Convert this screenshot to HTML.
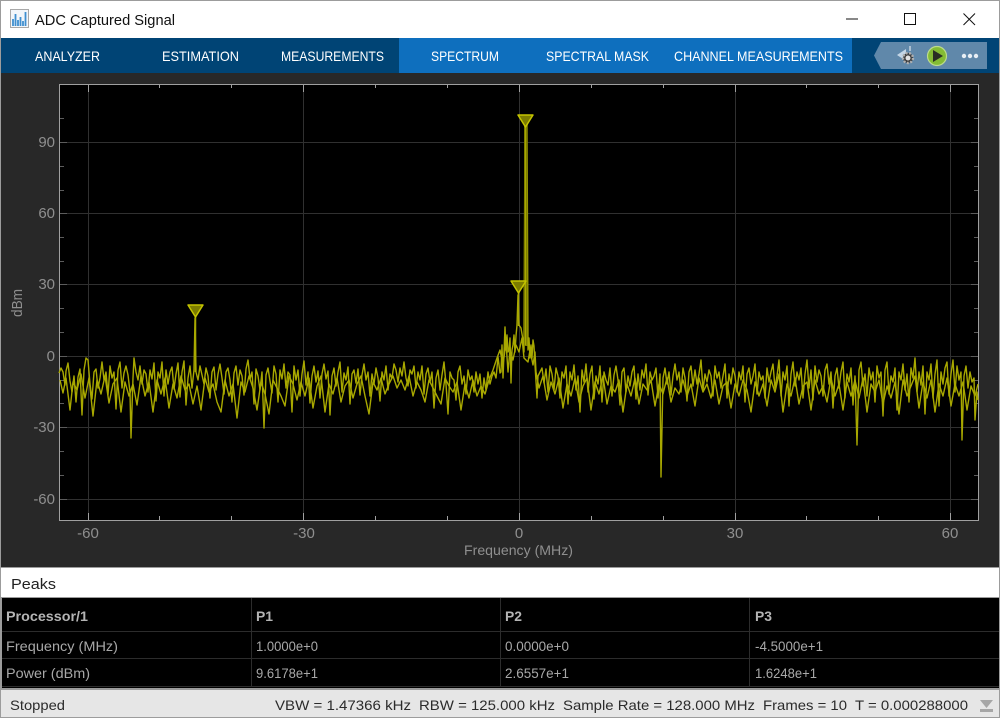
<!DOCTYPE html>
<html><head><meta charset="utf-8"><title>ADC Captured Signal</title>
<style>
html,body{margin:0;padding:0;background:#000;width:1000px;height:718px;overflow:hidden}
svg{display:block;font-family:"Liberation Sans",sans-serif}
.tab{fill:#fff;font-size:14px}
.ax{fill:#8f8f8f;font-size:15px}
.cell{fill:#a8a8a8;font-size:14px}
.hd{fill:#b4b4b4;font-size:14px;font-weight:bold}
.st{fill:#2b2b2b;font-size:14px}
</style></head><body>
<svg width="1000" height="718" viewBox="0 0 1000 718" xmlns="http://www.w3.org/2000/svg">
<defs><filter id="b" x="-2%" y="-2%" width="104%" height="104%"><feGaussianBlur stdDeviation="0.3"/></filter></defs>
<rect width="1000" height="718" fill="#9c9c9c"/>
<rect x="1" y="1" width="998" height="37" fill="#fff"/>
<!-- app icon -->
<rect x="10.500" y="9.500" width="18" height="18" fill="#f2f6fa" stroke="#a8a8a8"/>
<path d="M13 26V19M15.500 26V14M18 26V20M20.500 26V17M23 26V21M25.500 26V12" stroke="#3f8fd0" stroke-width="1.800" fill="none"/>
<text x="35" y="25" font-size="15" fill="#111" textLength="140" lengthAdjust="spacingAndGlyphs">ADC Captured Signal</text>
<!-- window controls -->
<path d="M846 19H858" stroke="#111" stroke-width="1"/>
<rect x="904.500" y="13.500" width="11" height="11" fill="none" stroke="#111"/>
<path d="M963.500 13.500L975 25M975 13.500L963.500 25" stroke="#111" stroke-width="1" fill="none"/>
<!-- toolstrip -->
<rect x="1" y="38" width="998" height="35" fill="#004475"/>
<rect x="399" y="38" width="453" height="35" fill="#0e6fbe"/>
<text class="tab" x="35" y="61" textLength="65" lengthAdjust="spacingAndGlyphs">ANALYZER</text>
<text class="tab" x="162" y="61" textLength="77" lengthAdjust="spacingAndGlyphs">ESTIMATION</text>
<text class="tab" x="281" y="61" textLength="103" lengthAdjust="spacingAndGlyphs">MEASUREMENTS</text>
<text class="tab" x="431" y="61" textLength="68" lengthAdjust="spacingAndGlyphs">SPECTRUM</text>
<text class="tab" x="546" y="61" textLength="103" lengthAdjust="spacingAndGlyphs">SPECTRAL MASK</text>
<text class="tab" x="674" y="61" textLength="169" lengthAdjust="spacingAndGlyphs">CHANNEL MEASUREMENTS</text>
<polygon points="881,42 987,42 987,69 881,69 874,55.500" fill="#6088aa"/>
<!-- toolbar icons -->
<polygon points="897,55 906,49 906,61" fill="#c4d6e6"/>
<circle cx="908" cy="58" r="5" fill="#3c3c3c" stroke="#b0b0b0" stroke-width="2.400" stroke-dasharray="2 1.500"/>
<circle cx="908" cy="58" r="2.500" fill="#e2e2e2"/>
<path d="M910 46V51" stroke="#dde6ee" stroke-width="1.200"/>
<circle cx="937" cy="56" r="9.500" fill="#84bc34" stroke="#bcdc8c" stroke-width="1.200"/>
<polygon points="933,50 933,62 943,56" fill="#2a2f24"/>
<circle cx="964" cy="56" r="2.200" fill="#e8eef4"/><circle cx="970" cy="56" r="2.200" fill="#e8eef4"/><circle cx="976" cy="56" r="2.200" fill="#e8eef4"/>
<!-- plot panel -->
<rect x="1" y="73" width="998" height="494" fill="#282828"/>
<rect x="59.500" y="84.500" width="919" height="436" fill="#000" stroke="#a0a0a0"/>
<g stroke="#303030" stroke-width="1">
<path d="M60 142.500H978M60 213.500H978M60 284.500H978M60 356.500H978M60 427.500H978M60 499.500H978"/>
<path d="M88.500 85V520M303.500 85V520M519.500 85V520M735.500 85V520M950.500 85V520"/>
</g>
<g stroke="#a0a0a0" stroke-width="1" fill="none">
<path d="M88.500 520V513M159.500 520V516M231.500 520V516M303.500 520V513M375.500 520V516M447.500 520V516M519.500 520V513M591.500 520V516M663.500 520V516M735.500 520V513M806.500 520V516M878.500 520V516M950.500 520V513"/>
<path d="M88.500 85V92M159.500 85V88M231.500 85V88M303.500 85V92M375.500 85V88M447.500 85V88M519.500 85V92M591.500 85V88M663.500 85V88M735.500 85V92M806.500 85V88M878.500 85V88M950.500 85V92"/>
</g>
<g stroke="#5c5c5c" stroke-width="1" fill="none">
<path d="M60 118.500H64M60 142.500H67M60 166.500H64M60 190.500H64M60 213.500H67M60 237.500H64M60 261.500H64M60 284.500H67M60 308.500H64M60 332.500H64M60 356.500H67M60 380.500H64M60 403.500H64M60 427.500H67M60 451.500H64M60 475.500H64M60 499.500H67"/>
<path d="M978 118.500H974M978 142.500H971M978 166.500H974M978 190.500H974M978 213.500H971M978 237.500H974M978 261.500H974M978 284.500H971M978 308.500H974M978 332.500H974M978 356.500H971M978 380.500H974M978 403.500H974M978 427.500H971M978 451.500H974M978 475.500H974M978 499.500H971"/>
</g>
<g class="ax" text-anchor="end">
<text x="55" y="147">90</text><text x="55" y="218">60</text><text x="55" y="289">30</text><text x="55" y="361">0</text><text x="55" y="432">-30</text><text x="55" y="504">-60</text>
</g>
<g class="ax" text-anchor="middle">
<text x="88" y="538">-60</text><text x="304" y="538">-30</text><text x="519" y="538">0</text><text x="735" y="538">30</text><text x="950" y="538">60</text>
<text x="518.500" y="555" font-size="14" textLength="109" lengthAdjust="spacingAndGlyphs">Frequency (MHz)</text>
<text transform="translate(22 303) rotate(-90)" textLength="28" lengthAdjust="spacingAndGlyphs">dBm</text>
</g>
<!-- spectrum trace -->
<g fill="none" stroke="#a8a800" stroke-width="1.400" stroke-linejoin="round" filter="url(#b)">
<polyline points="59,373 61,368 63,372 65,385 66,371 68,363 70,381 72,392 74,376 76,402 78,377 80,369 82,415 84,370 86,358 88,360 90,384 92,399 94,372 96,369 98,388 100,378 102,362 104,380 106,372 108,395 110,366 112,378 114,372 116,409 118,370 120,362 122,388 124,373 126,366 128,375 130,392 131,438 133,378 134,358 136,372 138,380 140,366 142,384 144,370 146,374 148,392 150,370 152,379 154,363 156,401 158,372 160,378 162,362 164,396 166,370 168,384 170,372 172,367 174,389 176,374 178,363 180,397 182,372 184,361 186,405 188,378 190,366 192,388 194,370 195,318 196,372 198,380 200,366 202,375 204,384 206,368 208,376 210,398 212,372 214,367 216,390 218,374 220,364 222,378 224,394 226,372 228,368 230,380 232,402 234,373 236,366 238,385 240,370 242,376 244,395 246,369 248,360 250,379 252,372 254,404 256,369 258,376 260,390 262,372 264,428 266,375 268,368 270,381 272,393 274,366 276,374 278,402 280,370 282,379 284,364 286,388 288,372 290,375 292,412 294,366 296,380 298,370 300,396 302,374 304,361 306,385 308,372 310,403 312,376 314,366 316,382 318,371 320,398 322,374 324,364 326,379 328,371 330,415 332,376 334,368 336,386 338,372 340,362 342,392 344,373 346,380 348,367 350,404 352,374 354,370 356,383 358,369 360,395 362,375 364,364 366,380 368,372 370,396 372,374 374,384 376,368 378,378 380,401 382,372 384,380 386,366 388,390 390,374 392,378 394,364 396,370 398,382 400,368 402,376 404,362 406,378 408,386 410,370 412,374 414,366 416,388 418,372 420,380 422,366 424,394 426,374 428,368 430,382 432,372 434,408 436,378 438,370 440,390 442,375 444,362 446,384 448,414 450,372 452,378 454,380 456,400 458,372 460,366 462,384 464,376 466,394 468,370 470,380 472,376 474,392 476,372 478,384 480,374 482,398 484,378 486,390 488,372 490,384 492,376 494,372 496,378 497,368 498,357 500,373 501,372 502,345 503,378 505,327 506,350 507,335 508,352 509,350 510,338 511,383 512,350 513,345 514,335 515,352 516,336 517,325 518,295 519,325 521,328 523,340 524,352 525,121 527,121 528,350 529,338 530,358 531,345 532,358 533,340 534,346 535,365 537,398 538,376 540,372 542,368 544,383 546,369 548,392 550,366 552,374 554,390 556,368 558,376 560,398 562,372 564,378 566,366 568,404 570,372 572,380 574,365 576,390 578,376 580,412 582,370 584,382 586,364 588,392 590,374 592,366 594,399 596,376 598,384 600,366 602,402 604,372 606,380 608,385 610,368 612,396 614,375 616,366 618,380 620,405 622,372 624,368 626,392 628,376 630,386 632,372 634,366 636,399 638,374 640,390 642,370 644,378 646,364 648,395 650,372 652,380 654,376 656,368 658,398 660,374 661,477 663,378 665,368 667,384 669,372 671,395 673,376 675,364 677,380 679,372 681,392 683,368 685,378 687,401 689,372 691,366 693,386 695,370 697,384 699,374 701,360 703,390 705,374 707,382 709,370 711,376 713,396 715,366 717,378 719,372 721,388 723,376 725,364 727,398 729,374 731,384 733,368 735,376 737,392 739,372 741,380 743,366 745,402 747,374 749,368 751,384 753,376 755,364 757,394 759,372 761,380 763,376 765,398 767,368 769,382 771,372 773,364 775,388 777,376 779,360 781,396 783,372 785,380 787,366 789,406 791,374 793,362 795,386 797,372 799,380 801,368 803,398 805,374 807,360 809,388 811,370 813,400 815,366 817,382 819,370 821,376 823,396 825,370 827,364 829,384 831,372 833,408 835,376 837,368 839,388 841,372 843,362 845,398 847,374 849,382 851,368 853,405 855,376 857,445 859,370 861,362 863,386 865,374 867,396 869,368 871,380 873,372 875,402 877,366 879,378 881,372 883,416 885,370 887,362 889,394 891,376 893,382 895,368 897,410 899,372 901,380 903,364 905,390 907,374 909,402 911,368 913,378 915,358 917,392 919,372 921,385 923,366 925,414 927,372 929,380 931,364 933,398 935,374 937,360 939,406 941,372 943,384 945,368 947,362 949,396 951,374 953,360 955,392 957,366 959,380 961,372 962,440 964,376 966,366 968,388 970,372 972,382 974,378 975,420 977,392 978,400"/>
<polyline points="60,380 63,393 66,378 70,410 73,382 77,390 81,374 85,398 89,378 93,416 97,380 101,394 105,376 109,403 113,384 117,378 121,412 125,382 129,396 133,384 137,405 141,376 145,396 149,382 153,412 157,380 161,394 165,378 169,408 173,384 177,398 181,376 185,390 189,384 193,404 197,386 201,410 205,378 209,392 213,384 217,402 221,412 225,380 229,396 233,384 237,418 241,382 245,392 249,376 253,388 257,410 261,382 265,394 269,414 273,380 277,388 281,396 285,406 289,376 293,384 297,400 301,382 305,396 309,378 313,408 317,386 321,376 325,412 329,384 333,394 337,378 341,402 345,386 349,380 353,398 357,384 361,376 365,396 369,414 373,382 377,390 381,378 385,394 389,384 393,376 397,388 401,380 405,390 409,376 413,396 417,382 421,390 425,402 429,380 433,388 437,396 441,404 445,378 449,386 453,392 457,382 461,410 465,384 469,398 473,380 477,396 481,386 485,394 489,380 493,370 497,358 500,350 503,365 506,342 508,372 510,350 513,360 516,345 519,352 522,338 524,358 528,362 530,350 533,365 535,352 536,372 539,388 543,376 547,400 551,382 555,394 559,378 563,408 567,384 571,396 575,378 579,402 583,386 587,378 591,410 595,382 599,394 603,376 607,404 611,386 615,392 619,380 623,412 627,384 631,396 635,378 639,404 643,384 647,390 651,380 655,406 659,384 663,394 667,378 671,402 675,388 679,394 683,380 687,396 691,384 695,406 699,378 703,392 707,384 711,398 715,380 719,404 723,386 727,382 731,408 735,384 739,396 743,380 747,390 751,412 755,382 759,396 763,384 767,406 771,380 775,392 779,374 783,412 787,384 791,396 795,378 799,404 803,386 807,382 811,410 815,380 819,394 823,386 827,402 831,378 835,396 839,384 843,410 847,382 851,396 855,380 859,398 863,378 867,412 871,384 875,392 879,380 883,404 887,386 891,398 895,382 899,414 903,380 907,396 911,386 915,376 919,408 923,382 927,398 931,380 935,412 939,384 943,396 947,378 951,406 955,384 959,396 963,382 967,410 971,386 975,396 978,384"/>
</g>
<rect x="524" y="121" width="3.500" height="225" fill="#7f7f00"/>
<path d="M525.500 125V345" stroke="#a8a800" stroke-width="1"/>
<path d="M518.500 292V326M195.500 316V372" stroke="#a8a800" stroke-width="1.500"/>
<g fill="#7c7c00" stroke="#c4c400" stroke-width="1.500" stroke-linejoin="round">
<polygon points="518,115 533,115 525.500,127"/>
<polygon points="511,281 526,281 518.500,293"/>
<polygon points="188,305 203,305 195.500,317"/>
</g>
<!-- Peaks header -->
<rect x="1" y="568" width="998" height="29" fill="#fff"/>
<text x="11" y="589" font-size="15" fill="#222" textLength="45" lengthAdjust="spacingAndGlyphs">Peaks</text>
<!-- table -->
<rect x="2" y="598" width="997" height="90" fill="#000"/>
<path d="M2 631.500H999M2 658.500H999M2 686.500H999M251.500 598V687M500.500 598V687M749.500 598V687" stroke="#2c2c2c" stroke-width="1" fill="none"/>
<text class="hd" x="6" y="621" textLength="82" lengthAdjust="spacingAndGlyphs">Processor/1</text>
<text class="hd" x="256" y="621" textLength="17" lengthAdjust="spacingAndGlyphs">P1</text>
<text class="hd" x="505" y="621" textLength="17" lengthAdjust="spacingAndGlyphs">P2</text>
<text class="hd" x="755" y="621" textLength="17" lengthAdjust="spacingAndGlyphs">P3</text>
<text class="cell" x="6" y="651" textLength="112" lengthAdjust="spacingAndGlyphs">Frequency (MHz)</text>
<text class="cell" x="6" y="678" textLength="84" lengthAdjust="spacingAndGlyphs">Power (dBm)</text>
<text class="cell" x="256" y="651" textLength="62" lengthAdjust="spacingAndGlyphs">1.0000e+0</text>
<text class="cell" x="505" y="651" textLength="64" lengthAdjust="spacingAndGlyphs">0.0000e+0</text>
<text class="cell" x="755" y="651" textLength="68" lengthAdjust="spacingAndGlyphs">-4.5000e+1</text>
<text class="cell" x="256" y="678" textLength="62" lengthAdjust="spacingAndGlyphs">9.6178e+1</text>
<text class="cell" x="505" y="678" textLength="64" lengthAdjust="spacingAndGlyphs">2.6557e+1</text>
<text class="cell" x="755" y="678" textLength="62" lengthAdjust="spacingAndGlyphs">1.6248e+1</text>
<!-- status bar -->
<rect x="1" y="690" width="998" height="27" fill="#e6e6e6"/>
<text class="st" x="10" y="710" textLength="55" lengthAdjust="spacingAndGlyphs">Stopped</text>
<text class="st" x="275" y="710" textLength="136" lengthAdjust="spacingAndGlyphs">VBW = 1.47366 kHz</text>
<text class="st" x="419" y="710" textLength="136" lengthAdjust="spacingAndGlyphs">RBW = 125.000 kHz</text>
<text class="st" x="563" y="710" textLength="192" lengthAdjust="spacingAndGlyphs">Sample Rate = 128.000 MHz</text>
<text class="st" x="763" y="710" textLength="84" lengthAdjust="spacingAndGlyphs">Frames = 10</text>
<text class="st" x="855" y="710" textLength="113" lengthAdjust="spacingAndGlyphs">T = 0.000288000</text>
<polygon points="980,700 993,700 986.500,708" fill="#a6a6a6"/>
<rect x="980" y="709" width="13" height="3" fill="#a6a6a6"/>
</svg>
</body></html>
